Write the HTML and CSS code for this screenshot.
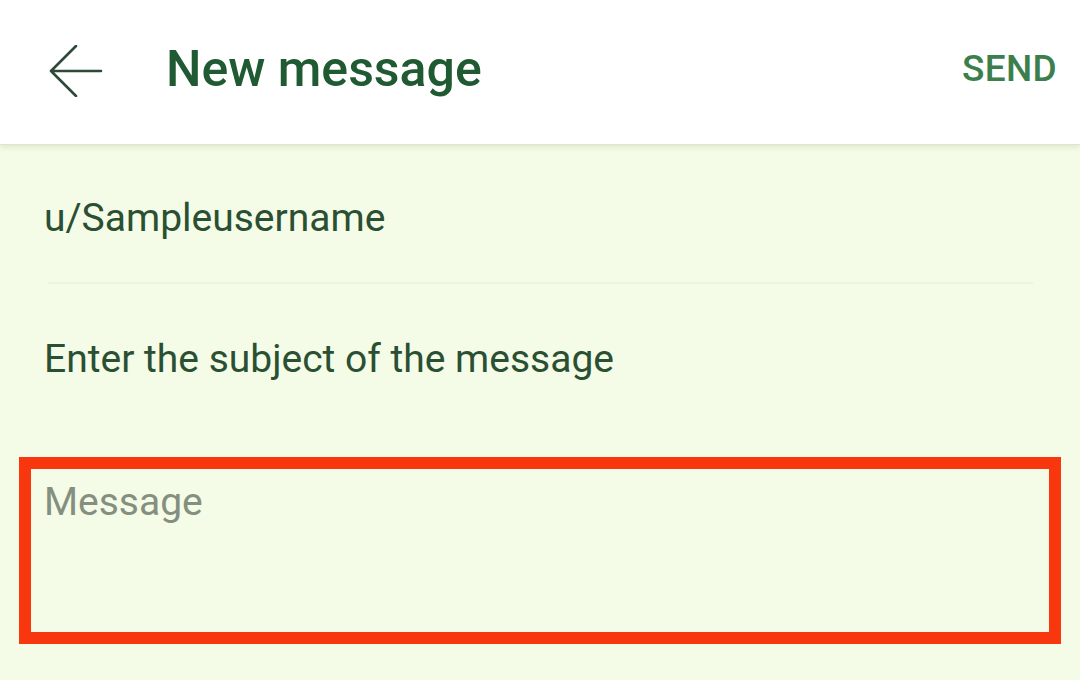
FILE: index.html
```html
<!DOCTYPE html>
<html>
<head>
<meta charset="utf-8">
<link rel="stylesheet" href="styles.css">
</head>
<body>
<div class="app">
  <header class="topbar">
    <button class="back" aria-label="Back">
      <svg width="54" height="52" viewBox="0 0 54 52"><path d="M2 26 H52 M27 1 L2 26 L27 51" fill="none" stroke="#2d4a38" stroke-width="2.6" stroke-linecap="round" stroke-linejoin="round"/></svg>
    </button>
    <h1 class="title">New message</h1>
    <span class="send">SEND</span>
  </header>
  <main class="form">
    <div class="field to">u/Sampleusername</div>
    <div class="divider"></div>
    <div class="field subject">Enter the subject of the message</div>
    <div class="msgbox">
      <div class="placeholder">Message</div>
    </div>
  </main>
</div>
</body>
</html>
```
FILE: styles.css
```css
* { box-sizing: border-box; }
html, body { margin: 0; padding: 0; }
body {
  width: 1080px;
  height: 680px;
  overflow: hidden;
  background: #f4fbe6;
  font-family: Roboto, "Noto Sans", sans-serif;
}
.app { display: flex; flex-direction: column; height: 680px; }
.topbar {
  height: 144px;
  flex: none;
  background: #ffffff;
  display: flex;
  align-items: center;
  padding: 0 23px 0 49px;
  box-shadow: 0 1px 0 #dfe5cf, 0 3px 5px rgba(160, 175, 130, 0.25);
  position: relative;
  z-index: 1;
}
.back {
  border: 0;
  background: none;
  padding: 0;
  width: 54px;
  height: 52px;
  display: flex;
  margin-top: -2px;
}
.title {
  margin: 0 0 6px 63px;
  font-size: 50px;
  font-weight: 500;
  color: #1f5a33;
  flex: 1;
}
.send {
  font-size: 37px;
  font-weight: 500;
  color: #3c7f4c;
  letter-spacing: 0.3px;
  margin-bottom: 7px;
}
.form {
  display: flex;
  flex-direction: column;
  padding: 0 19px;
}
.field {
  font-size: 39px;
  color: #2a4f33;
  line-height: 44px;
  padding-left: 25px;
}
.to { padding-top: 52px; height: 138px; }
.divider {
  height: 2px;
  background: #ecf4dc;
  margin: 0 28px 0 29px;
}
.subject { padding-top: 53px; height: 173px; }
.msgbox {
  height: 187px;
  border: 12px solid #f8370f;
  padding: 11px 13px;
}
.placeholder {
  font-size: 39px;
  line-height: 44px;
  color: #858f80;
}
```
